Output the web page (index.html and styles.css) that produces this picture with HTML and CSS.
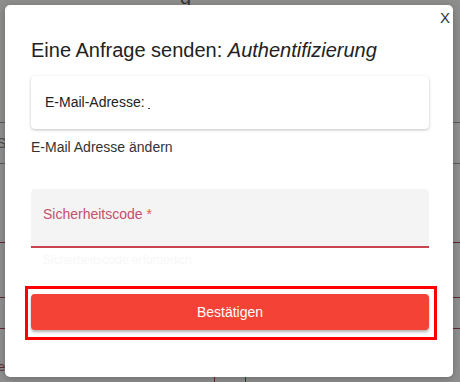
FILE: index.html
```html
<!DOCTYPE html>
<html lang="de">
<head>
<meta charset="utf-8">
<title>Authentifizierung</title>
<link rel="stylesheet" href="styles.css">
</head>
<body>
<div class="page">
  <div class="page-top"><span class="page-g">g</span></div>
  <div class="page-row row-a"></div>
  <div class="page-row row-b"><span class="page-s">S</span></div>
  <div class="page-row row-c"></div>
  <div class="page-row row-d"></div>
  <div class="page-row row-e"></div>
  <div class="page-row row-f"><span class="page-er">er</span></div>
  <div class="page-foot"><span class="vline"></span><span class="vline"></span></div>
</div>

<div class="backdrop"></div>

<div class="modal" role="dialog">
  <button class="close" type="button">X</button>
  <h2 class="title">Eine Anfrage senden: <em>Authentifizierung</em></h2>
  <div class="email-card">E-Mail-Adresse:<span class="email-mask"></span></div>
  <div class="change-link">E-Mail Adresse ändern</div>
  <div class="field">
    <label class="field-label">Sicherheitscode <span class="req">*</span></label>
  </div>
  <div class="helper">Sicherheitscode erforderlich</div>
  <div class="highlight">
    <button class="confirm" type="button">Bestätigen</button>
  </div>
</div>
</body>
</html>
```

FILE: styles.css
```css
html, body {
  margin: 0;
  padding: 0;
}
body {
  width: 460px;
  height: 382px;
  overflow: hidden;
  font-family: "Liberation Sans", Arial, sans-serif;
  background: #ffffff;
  position: relative;
}

/* underlying page (seen through backdrop) */
.page {
  display: flex;
  flex-direction: column;
  width: 460px;
  height: 382px;
}
.page-top {
  height: 123px;
  border-bottom: 1px solid #7a7a7a;
  box-sizing: border-box;
  background: #fafaf5;
  position: relative;
}
.page-g {
  position: absolute;
  left: 180px;
  top: -14px;
  font-size: 20px;
  color: #222;
}
.page-row { box-sizing: border-box; }
.row-a { height: 41px; border-bottom: 1px solid #7a7a7a; }
.row-b { height: 0; position: relative; }
.page-s {
  position: absolute;
  left: -3px;
  top: -29px;
  font-size: 14px;
  color: #555;
}
.row-c { height: 79px; border-bottom: 1px solid #8a0010; }
.row-d { height: 55px; border-bottom: 1px solid #8a0010; }
.row-e { height: 31px; border-bottom: 1px solid #8a0010; }
.row-f { height: 40px; position: relative; }
.page-er {
  position: absolute;
  left: -2px;
  top: 30px;
  font-size: 13px;
  color: #8a0010;
}
.page-foot {
  flex: 1;
  display: flex;
  gap: 30px;
  padding-left: 214px;
}
.vline {
  width: 1px;
  background: #8a0010;
}

.backdrop {
  position: absolute;
  inset: 0;
  background: rgba(70, 70, 70, 0.6);
}

/* modal */
.modal {
  position: absolute;
  left: 5px;
  top: 5px;
  width: 448px;
  height: 372px;
  box-sizing: border-box;
  padding: 33px 24px 0 26px;
  background: #ffffff;
  border-radius: 5px;
  box-shadow: 0 2px 8px rgba(0, 0, 0, 0.25);
}
.close {
  position: absolute;
  top: 5px;
  right: 3px;
  border: 0;
  background: transparent;
  padding: 0;
  font-family: "Liberation Sans", Arial, sans-serif;
  font-size: 15px;
  line-height: 16px;
  color: #333;
  cursor: pointer;
}
.title {
  margin: 0;
  font-size: 20px;
  line-height: 24px;
  font-weight: normal;
  color: #222;
}
.title em {
  font-style: italic;
}
.email-card {
  margin-top: 14px;
  padding: 18px 14px 19px;
  font-size: 14px;
  line-height: 16px;
  color: #222;
  border-radius: 4px;
  box-shadow: 0 1px 3px rgba(0, 0, 0, 0.25);
}
.email-mask {
  display: inline-block;
  width: 2px;
  height: 1px;
  margin-left: 3px;
  vertical-align: -2px;
  background: #444;
}
.change-link {
  margin-top: 10px;
  font-size: 14px;
  line-height: 16px;
  color: #333;
}
.field {
  margin-top: 34px;
  height: 59px;
  box-sizing: border-box;
  padding: 17px 12px 0;
  background: #f4f4f4;
  border-radius: 4px 4px 0 0;
  border-bottom: 2px solid #c9424f;
}
.field-label {
  display: block;
  font-size: 14px;
  line-height: 16px;
  color: #c2506c;
}
.req {
  color: #ea5a4e;
}
.helper {
  margin-top: 5px;
  padding-left: 12px;
  font-size: 12px;
  line-height: 14px;
  color: #f7f7f7;
}
.highlight {
  margin: 19px 0 0 -6px;
  width: 412px;
  box-sizing: border-box;
  border: 3px solid #ff0000;
  padding: 5px 5px 7px 3px;
}
.confirm {
  display: block;
  width: 398px;
  height: 36px;
  border: 0;
  border-radius: 4px;
  background: #f44336;
  color: #ffffff;
  font-family: "Liberation Sans", Arial, sans-serif;
  font-size: 14px;
  box-shadow: 0 2px 3px rgba(0, 0, 0, 0.3);
  cursor: pointer;
}
```
